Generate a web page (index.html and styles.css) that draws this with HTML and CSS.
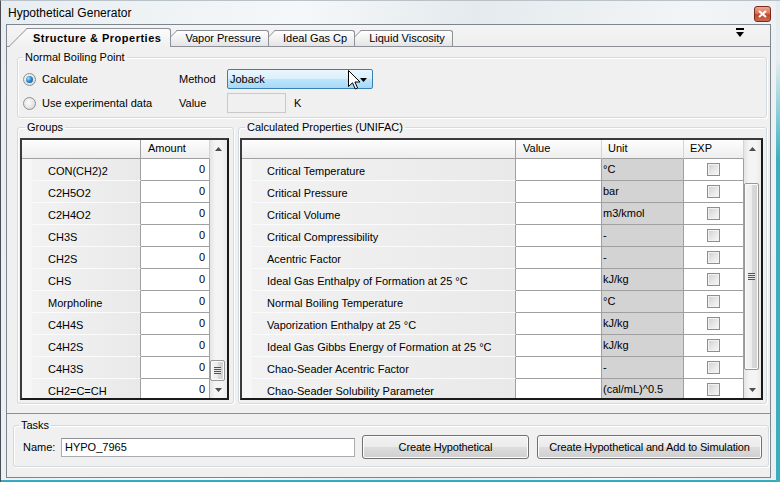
FILE: index.html
```html
<!DOCTYPE html>
<html>
<head>
<meta charset="utf-8">
<title>Hypothetical Generator</title>
<link rel="stylesheet" href="styles.css">
</head>
<body>
<div class="window">
  <div class="titlebar">
    <span class="title">Hypothetical Generator</span>
    <div class="close">
      <svg width="9" height="8" viewBox="0 0 9 8"><path d="M1 1 L8 7 M8 1 L1 7" stroke="#fff" stroke-width="2"/></svg>
    </div>
  </div>
  <div class="client">
    <div class="tabstrip">
      <div class="tab active">Structure &amp; Properties</div>
      <div class="tab t2">Vapor Pressure</div>
      <div class="tab t3">Ideal Gas Cp</div>
      <div class="tab t4">Liquid Viscosity</div>
      <div class="strip-menu">
        <svg width="8" height="10" viewBox="0 0 8 10"><rect x="0" y="0" width="8" height="2" fill="#000"/><polygon points="0,4 8,4 4,9" fill="#000"/></svg>
      </div>
    </div>
    <div class="tabpage">
      <fieldset class="gb nbp">
        <legend>Normal Boiling Point</legend>
        <div class="nbp-grid">
          <label class="opt"><span class="radio checked"></span>Calculate</label>
          <span class="lbl">Method</span>
          <div class="combo">
            <span>Joback</span>
            <svg class="drop" width="7" height="4" viewBox="0 0 7 4"><polygon points="0,0 7,0 3.5,4" fill="#000"/></svg>
            <svg class="cursor" width="13" height="20" viewBox="0 0 13 20"><path d="M0.5 0.5 L0.5 16.5 L4.5 12.8 L7.3 19 L9.6 18 L6.9 12 L12 12 Z" fill="#fff" stroke="#000" stroke-width="1" stroke-linejoin="miter"/></svg>
          </div>
          <span></span>
          <label class="opt"><span class="radio"></span>Use experimental data</label>
          <span class="lbl">Value</span>
          <div class="valbox"></div>
          <span class="kunit">K</span>
        </div>
      </fieldset>
      <div class="lower">
        <fieldset class="gb groups">
          <legend>Groups</legend>
          <div class="grid ggrid">
            <div class="gview">
              <div class="hrow">
                <div class="hc corner g-corner"></div>
                <div class="hc g-amt">Amount</div>
              </div>
              <div class="row"><div class="sel"></div><div class="rh g-rh">CON(CH2)2</div><div class="num">0</div></div>
              <div class="row"><div class="sel"></div><div class="rh g-rh">C2H5O2</div><div class="num">0</div></div>
              <div class="row"><div class="sel"></div><div class="rh g-rh">C2H4O2</div><div class="num">0</div></div>
              <div class="row"><div class="sel"></div><div class="rh g-rh">CH3S</div><div class="num">0</div></div>
              <div class="row"><div class="sel"></div><div class="rh g-rh">CH2S</div><div class="num">0</div></div>
              <div class="row"><div class="sel"></div><div class="rh g-rh">CHS</div><div class="num">0</div></div>
              <div class="row"><div class="sel"></div><div class="rh g-rh">Morpholine</div><div class="num">0</div></div>
              <div class="row"><div class="sel"></div><div class="rh g-rh">C4H4S</div><div class="num">0</div></div>
              <div class="row"><div class="sel"></div><div class="rh g-rh">C4H2S</div><div class="num">0</div></div>
              <div class="row"><div class="sel"></div><div class="rh g-rh">C4H3S</div><div class="num">0</div></div>
              <div class="row"><div class="sel"></div><div class="rh g-rh">CH2=C=CH</div><div class="num">0</div></div>
            </div>
            <div class="vscroll">
              <div class="sbtn"><svg width="7" height="4" viewBox="0 0 7 4"><polygon points="3.5,0 7,4 0,4" fill="#4d4d4d"/></svg></div>
              <div class="track">
                <div class="thumb g-thumb"><span class="grip"></span></div>
              </div>
              <div class="sbtn"><svg width="7" height="4" viewBox="0 0 7 4"><polygon points="0,0 7,0 3.5,4" fill="#4d4d4d"/></svg></div>
            </div>
          </div>
        </fieldset>
        <fieldset class="gb props">
          <legend>Calculated Properties (UNIFAC)</legend>
          <div class="grid pgrid">
            <div class="gview">
              <div class="hrow">
                <div class="hc corner p-corner"></div>
                <div class="hc p-val">Value</div>
                <div class="hc p-unit">Unit</div>
                <div class="hc p-exp">EXP</div>
              </div>
              <div class="row"><div class="sel"></div><div class="rh p-rh">Critical Temperature</div><div class="val"></div><div class="unit">°C</div><div class="exp"><span class="cb"></span></div></div>
              <div class="row"><div class="sel"></div><div class="rh p-rh">Critical Pressure</div><div class="val"></div><div class="unit">bar</div><div class="exp"><span class="cb"></span></div></div>
              <div class="row"><div class="sel"></div><div class="rh p-rh">Critical Volume</div><div class="val"></div><div class="unit">m3/kmol</div><div class="exp"><span class="cb"></span></div></div>
              <div class="row"><div class="sel"></div><div class="rh p-rh">Critical Compressibility</div><div class="val"></div><div class="unit">-</div><div class="exp"><span class="cb"></span></div></div>
              <div class="row"><div class="sel"></div><div class="rh p-rh">Acentric Factor</div><div class="val"></div><div class="unit">-</div><div class="exp"><span class="cb"></span></div></div>
              <div class="row"><div class="sel"></div><div class="rh p-rh">Ideal Gas Enthalpy of Formation at 25 °C</div><div class="val"></div><div class="unit">kJ/kg</div><div class="exp"><span class="cb"></span></div></div>
              <div class="row"><div class="sel"></div><div class="rh p-rh">Normal Boiling Temperature</div><div class="val"></div><div class="unit">°C</div><div class="exp"><span class="cb"></span></div></div>
              <div class="row"><div class="sel"></div><div class="rh p-rh">Vaporization Enthalpy at 25 °C</div><div class="val"></div><div class="unit">kJ/kg</div><div class="exp"><span class="cb"></span></div></div>
              <div class="row"><div class="sel"></div><div class="rh p-rh">Ideal Gas Gibbs Energy of Formation at 25 °C</div><div class="val"></div><div class="unit">kJ/kg</div><div class="exp"><span class="cb"></span></div></div>
              <div class="row"><div class="sel"></div><div class="rh p-rh">Chao-Seader Acentric Factor</div><div class="val"></div><div class="unit">-</div><div class="exp"><span class="cb"></span></div></div>
              <div class="row"><div class="sel"></div><div class="rh p-rh">Chao-Seader Solubility Parameter</div><div class="val"></div><div class="unit">(cal/mL)^0.5</div><div class="exp"><span class="cb"></span></div></div>
            </div>
            <div class="vscroll">
              <div class="sbtn"><svg width="7" height="4" viewBox="0 0 7 4"><polygon points="3.5,0 7,4 0,4" fill="#4d4d4d"/></svg></div>
              <div class="track">
                <div class="thumb p-thumb"><span class="grip"></span></div>
              </div>
              <div class="sbtn"><svg width="7" height="4" viewBox="0 0 7 4"><polygon points="0,0 7,0 3.5,4" fill="#4d4d4d"/></svg></div>
            </div>
          </div>
        </fieldset>
      </div>
    </div>
    <div class="tasks-area">
      <fieldset class="gb tasks">
        <legend>Tasks</legend>
        <div class="tasks-row">
          <span class="name-lbl">Name:</span>
          <div class="namebox">HYPO_7965</div>
          <div class="btn b1">Create Hypothetical</div>
          <div class="btn b2">Create Hypothetical and Add to Simulation</div>
        </div>
      </fieldset>
    </div>
  </div>
</div>
</body>
</html>
```
FILE: styles.css
```css
* { box-sizing: border-box; }
html, body { margin: 0; padding: 0; }
body {
  width: 780px; height: 482px; overflow: hidden;
  font: 11px/13px "Liberation Sans", Arial, sans-serif;
  color: #000;
  background: #2fb4c4;
}
.window {
  width: 780px; height: 482px;
  display: flex; flex-direction: column;
  border-left: 1px solid #4b4f55;
  border-top: 1px solid #b9c2c8;
  padding: 0 9px 4px 5px;
  background:
    linear-gradient(#e6ecef 0px, #e6ecef 60px, #8fcfd8 110px, #3aaec0 160px) right top / 4px 100% no-repeat,
    linear-gradient(#3aaec0, #2fa9bc) left bottom / 100% 2px no-repeat,
    linear-gradient(100deg, #e7edf1 0%, #f5f8fa 35%, #e4eaee 55%, #f2f5f7 80%, #e9eef1 100%);
}
.titlebar {
  height: 23px; flex: none;
  display: flex; align-items: center; justify-content: space-between;
  padding-left: 2px;
}
.title { font-size: 12px; color: #000; padding-top: 1px; }
.close {
  width: 17px; height: 16px; margin-right: 0; margin-top: 2px;
  border: 1px solid #7b2a18; border-radius: 3px;
  background: linear-gradient(#eaa793 0%, #d9755e 45%, #c2442a 55%, #d06a50 100%);
  display: flex; align-items: center; justify-content: center;
}
.client {
  flex: none; height: 454px;
  border: 1px solid #7d858d;
  background: #f0f0f0;
  display: flex; flex-direction: column;
}
/* tabs */
.tabstrip {
  height: 21px; flex: none;
  display: flex; align-items: flex-end;
  padding-left: 21px;
  position: relative;
  background: linear-gradient(#f4f4f4, #eeeeee);
}
.tab {
  position: relative;
  height: 16px;
  margin-left: 7px;
  padding: 0 7px;
  border-top: 1px solid #8d9096;
  border-right: 1px solid #8d9096;
  border-top-right-radius: 3px;
  background: linear-gradient(#ffffff, #e4e4e4);
  line-height: 15px;
  white-space: nowrap;
}
.tab::before {
  content: "";
  position: absolute;
  left: -17px; top: -1px; bottom: 0;
  width: 22px;
  border-left: 1px solid #8d9096;
  border-top: 1px solid #8d9096;
  background: inherit;
  transform: skewX(-45deg);
  transform-origin: bottom left;
  z-index: -1;
}
.tab.active {
  height: 19px; margin-bottom: -1px; margin-left: 0;
  padding: 0 9px 0 5px;
  font-weight: bold;
  letter-spacing: 0.5px;
  line-height: 18px;
  background: linear-gradient(#fbfbfb, #f0f0f0);
  z-index: 5;
}
.tab.active::before { left: -20px; width: 24px; }
.tab.t2 { z-index: 3; }
.tab.t3 { z-index: 2; }
.tab.t4 { z-index: 1; }
.strip-menu { margin-left: auto; margin-right: 26px; align-self: flex-start; margin-top: 3px; display: flex; }

.tabpage {
  flex: none; height: 368px;
  border-top: 1px solid #8d9096;
  border-bottom: 1px solid #8d9096;
  background: #f0f0f0;
  display: flex; flex-direction: column;
}
/* group boxes */
.gb {
  margin: 0; padding: 0; min-width: 0;
  border: 1px solid #d3dbe0;
  border-radius: 3px;
  box-shadow: inset 1px 1px 0 #fff, 1px 1px 0 #fff;
}
.gb legend {
  padding: 0 2px; margin-left: 5px;
  line-height: 13px;
}
.nbp { margin: 4px 3px 0 10px; height: 67px; }
.nbp-grid {
  display: grid;
  grid-template-columns: 156px 48px 146px auto;
  grid-template-rows: 20px 20px;
  row-gap: 4px;
  padding: 5px 0 0 5px;
  align-items: center;
}
.opt { display: flex; align-items: center; }
.radio {
  width: 13px; height: 13px; border-radius: 50%;
  border: 1px solid #8e8f8f;
  background: radial-gradient(circle at 40% 40%, #fdfdfd 0%, #e6e6e6 55%, #cfcfcf 100%);
  margin-right: 6px;
  display: flex; align-items: center; justify-content: center;
}
.radio.checked::after {
  content: ""; width: 7px; height: 7px; border-radius: 50%;
  background: radial-gradient(circle at 35% 35%, #a6e0ff 0%, #2d8ad0 45%, #0b4a8c 100%);
}
.combo {
  position: relative;
  height: 20px;
  border: 1px solid #3c7fb1;
  border-radius: 2px;
  background: linear-gradient(#eaf6fd 0%, #d9f0fc 50%, #bee6fd 50%, #a7d9f5 100%);
  display: flex; align-items: center;
  padding-left: 2px;
}
.combo .drop { position: absolute; right: 5px; top: 8px; }
.combo .cursor { position: absolute; left: 120px; top: 0px; }
.valbox {
  width: 59px; height: 20px;
  border: 1px solid #c9c9c9;
  background: #f0f0f0;
}
.kunit { margin-left: -79px; }

.lower {
  display: flex;
  margin: 3px 3px 0 10px;
  gap: 4px;
}
.groups { width: 217px; height: 283px; padding: 4px 4px 0 2px; }
.props { width: 529px; height: 283px; padding: 4px 3px 0 1px; }

.grid {
  height: 262px;
  border: 2px solid #1f1f1f;
  border-color: #3a3a3a #1a1a1a #1a1a1a #3a3a3a;
  display: flex;
  background: #fff;
}
.gview { overflow: hidden; height: 258px; flex: none; }
.ggrid .gview { width: 188px; }
.pgrid .gview { width: 502px; }
.hrow { display: flex; height: 19px; }
.hc {
  height: 19px;
  border-bottom: 1px solid #a0a0a0;
  border-right: 1px solid #d5d5d5;
  background: linear-gradient(#fdfdfd 0%, #f6f6f6 50%, #eeeeee 100%);
  padding: 2px 0 0 6px;
}
.g-corner { width: 119px; border-right-color: #a0a0a0; }
.g-amt { width: 69px; padding-left: 7px; }
.p-corner { width: 274px; border-right-color: #a0a0a0; }
.p-val { width: 86px; padding-left: 7px; }
.p-unit { width: 82px; }
.p-exp { width: 60px; }

.row { display: flex; height: 22px; }
.sel { width: 10px; flex: none; background: #f6f6f6; }
.rh {
  flex: none;
  border-right: 1px solid #a0a0a0;
  border-bottom: 1px solid #fbfbfb;
  background: linear-gradient(to right, #f2f2f2, #e9e9e9);
  padding: 6px 0 0 16px;
  white-space: nowrap; overflow: hidden;
}
.g-rh { width: 109px; }
.p-rh { width: 264px; padding-left: 15px; }
.num {
  width: 69px; flex: none;
  border-right: 1px solid #a0a0a0;
  border-bottom: 1px solid #a0a0a0;
  background: #fff;
  text-align: right;
  padding: 4px 4px 0 0;
}
.val { width: 86px; flex: none; border-right: 1px solid #a0a0a0; border-bottom: 1px solid #a0a0a0; background: #fff; }
.unit {
  width: 82px; flex: none;
  border-right: 1px solid #a0a0a0; border-bottom: 1px solid #a0a0a0;
  background: #d3d3d3;
  padding: 4px 0 0 1px;
  white-space: nowrap;
}
.exp {
  width: 60px; flex: none;
  border-right: 1px solid #a0a0a0; border-bottom: 1px solid #a0a0a0;
  background: #fff;
  display: flex; justify-content: center;
  padding-top: 4px;
}
.cb {
  width: 13px; height: 13px;
  border: 1px solid #8f8f8f;
  background: linear-gradient(135deg, #cfcfcf 0%, #e6e6e6 50%, #f8f8f8 100%);
  box-shadow: inset 0 0 0 1px #f2f2f2;
}
/* scrollbars */
.vscroll {
  width: 17px; flex: none;
  display: flex; flex-direction: column;
  background: linear-gradient(to right, #e4e4e4, #f4f4f4 30%, #f4f4f4 70%, #e9e9e9);
}
.sbtn { height: 17px; flex: none; display: flex; align-items: center; justify-content: center; }
.track { flex: 1; position: relative; display: flex; flex-direction: column; }
.thumb {
  width: 15px;
  border: 1px solid #979797;
  border-radius: 2px;
  background: linear-gradient(to right, #f5f5f5 0%, #ececec 50%, #dadada 51%, #d2d2d2 100%);
  box-shadow: inset 0 0 0 1px #fbfbfb;
  display: flex; align-items: center; justify-content: center;
}
.g-thumb { margin-top: 203px; height: 21px; }
.p-thumb { margin-top: 26px; height: 187px; }
.grip {
  width: 7px; height: 7px;
  background: repeating-linear-gradient(#555 0 1px, #e8e8e8 1px 2px);
}
/* tasks */
.tasks-area { flex: 1; display: flex; flex-direction: column; }
.tasks { margin: 5px 1px 0 6px; height: 48px; }
.tasks-row { display: flex; align-items: center; padding: 3px 0 0 9px; height: 27px; }
.name-lbl { width: 38px; flex: none; }
.namebox {
  width: 294px; height: 19px; flex: none;
  border: 1px solid #abadb3;
  border-top-color: #8e9095;
  background: #fff;
  padding: 2px 0 0 3px;
}
.btn {
  height: 24px; flex: none;
  border: 1px solid #707070;
  border-radius: 3px;
  background: linear-gradient(#f2f2f2 0%, #ebebeb 50%, #dddddd 50%, #cfcfcf 100%);
  box-shadow: inset 0 0 0 1px #fcfcfc;
  display: flex; align-items: center; justify-content: center;
  letter-spacing: -0.15px;
}
.b1 { width: 167px; margin-left: 7px; }
.b2 { width: 225px; margin-left: 8px; }
```
